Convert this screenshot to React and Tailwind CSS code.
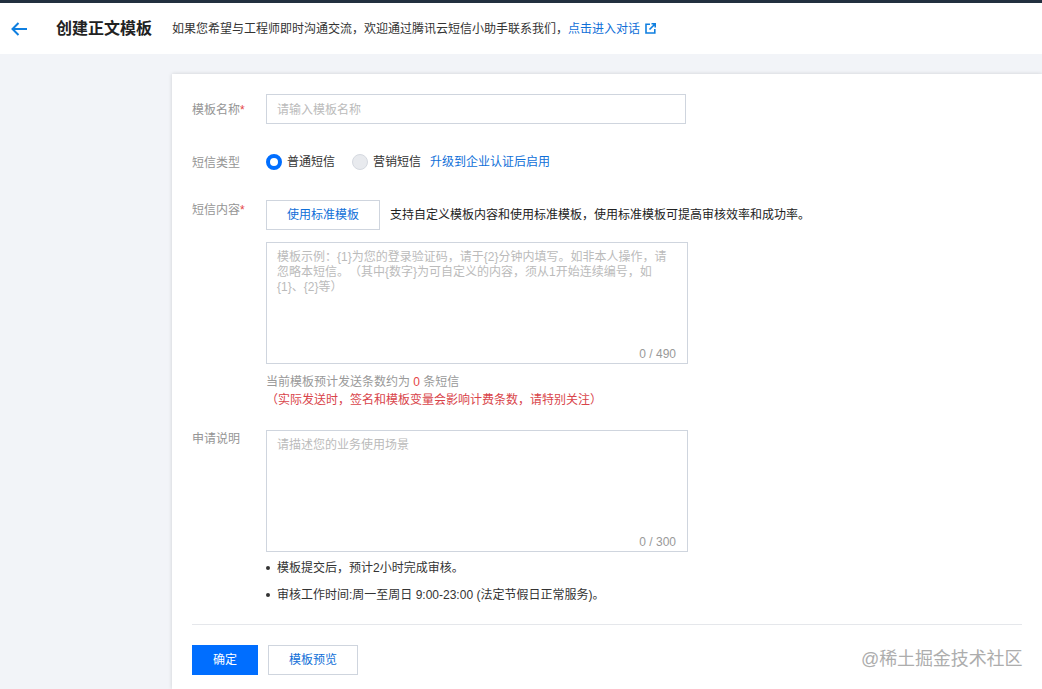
import React from 'react';

const font = { fontFamily: '"Liberation Sans", "Noto Sans CJK SC", sans-serif' };

function FormRow({ label, required, className = '', labelClass = '', children }) {
  return (
    <div className={`flex ${className}`}>
      <div className={`w-[74px] shrink-0 text-xs text-[#959595] ${labelClass}`}>
        {label}
        {required && <span className="text-[#e54545]">*</span>}
      </div>
      <div className="min-w-0 flex-1">{children}</div>
    </div>
  );
}

function TextBox({ height, width, children, count }) {
  return (
    <div className={`relative border border-[#cfd5de] bg-white px-[10px] pt-[7px] ${height} ${width}`}>
      <p className="text-xs leading-[15px] whitespace-nowrap text-[#bbbbbb] [text-spacing-trim:space-all]">{children}</p>
      <span className="absolute right-[11px] bottom-[1px] text-xs text-[#999999]">{count}</span>
    </div>
  );
}

export default function App() {
  return (
    <div style={font} className="flex h-[689px] flex-col overflow-hidden bg-[#f2f4f8]">
      {/* Header */}
      <header className="flex h-[54px] shrink-0 items-center border-t-[3px] border-[#22303f] bg-white pl-[11px]">
        <svg className="h-[14px] w-[16px]" viewBox="0 0 16 14" fill="none" stroke="#0f7fe0" strokeWidth="2">
          <path d="M16 7H1.500" />
          <path d="M7.500 1 1.500 7l6 6" />
        </svg>
        <h1 className="ml-[29px] text-base font-bold text-[#222222]">创建正文模板</h1>
        <p className="ml-[20px] text-xs text-[#333333]">如果您希望与工程师即时沟通交流，欢迎通过腾讯云短信小助手联系我们，</p>
        <a className="text-xs text-[#0f6fd8]">点击进入对话</a>
        <svg className="ml-[5px] h-[11px] w-[11px]" viewBox="0 0 11 11" fill="none" stroke="#0f7fe0" strokeWidth="1.6">
          <path d="M5 1.200H1v8.800h8.800V6" />
          <path d="M4.500 6.500 10 1M6.500 .8H10.200V4.500" />
        </svg>
      </header>

      {/* Form card */}
      <main className="mt-[20px] ml-[172px] flex-1 bg-white pt-[20px] pr-[20px] pl-[20px] shadow-[0_0_4px_rgba(0,0,0,0.15)]">
        <FormRow label="模板名称" required labelClass="leading-[32px]">
          <div className="flex h-[30px] w-[420px] items-center border border-[#cfd5de] px-[10px] pt-[2px] text-xs text-[#bbbbbb]">
            请输入模板名称
          </div>
        </FormRow>

        <FormRow label="短信类型" className="mt-[24px]" labelClass="leading-[26px]">
          <div className="flex h-[24px] items-center text-xs text-[#333333]">
            <span className="h-4 w-4 rounded-full border-[4px] border-[#006eff] bg-white" />
            <span className="ml-[5px]">普通短信</span>
            <span className="ml-[17px] h-4 w-4 rounded-full border border-[#d5d9e0] bg-[#e8eaee]" />
            <span className="ml-[5px]">营销短信</span>
            <a className="ml-[9px] text-[#0f6fd8]">升级到企业认证后启用</a>
          </div>
        </FormRow>

        <FormRow label="短信内容" required className="mt-[24px]" labelClass="leading-[20px]">
          <div className="flex items-center">
            <button className="h-[30px] w-[114px] border border-[#cfd5de] bg-white text-xs text-[#0f6fd8]">使用标准模板</button>
            <span className="ml-[10px] text-xs text-[#222222]">支持自定义模板内容和使用标准模板，使用标准模板可提高审核效率和成功率。</span>
          </div>
          <div className="mt-3">
            <TextBox height="h-[122px]" width="w-[422px]" count="0 / 490">
              模板示例：{'{1}'}为您的登录验证码，请于{'{2}'}分钟内填写。如非本人操作，请
              <br />
              忽略本短信。（其中{'{数字}'}为可自定义的内容，须从1开始连续编号，如
              <br />
              {'{1}'}、{'{2}'}等）
            </TextBox>
          </div>
          <p className="mt-[9px] text-xs leading-[18px] text-[#999999]">
            当前模板预计发送条数约为 <span className="text-[#e54545]">0</span> 条短信
          </p>
          <p className="text-xs leading-[18px] text-[#d9444a]">（实际发送时，签名和模板变量会影响计费条数，请特别关注）</p>
        </FormRow>

        <FormRow label="申请说明" className="mt-[21px]" labelClass="leading-[18px]">
          <TextBox height="h-[122px]" width="w-[422px]" count="0 / 300">
            请描述您的业务使用场景
          </TextBox>
          <ul className="mt-[7px] text-xs text-[#333333]">
            <li className="flex h-[18px] items-center">
              <span className="h-[4px] w-[4px] rounded-full bg-[#333333]" />
              <span className="ml-[7px]">模板提交后，预计2小时完成审核。</span>
            </li>
            <li className="mt-[9px] flex h-[18px] items-center">
              <span className="h-[4px] w-[4px] rounded-full bg-[#333333]" />
              <span className="ml-[7px]">审核工作时间:周一至周日 9:00-23:00 (法定节假日正常服务)。</span>
            </li>
          </ul>
        </FormRow>

        <div className="mt-[20px] flex gap-[10px] border-t border-[#e5e7eb] pt-[20px]">
          <button className="h-[30px] w-[66px] bg-[#006eff] text-xs text-white">确定</button>
          <button className="h-[30px] w-[90px] border border-[#cfd5de] bg-white text-xs text-[#0f6fd8]">模板预览</button>
        </div>
      </main>

      {/* Watermark */}
      <div className="absolute top-[647px] left-[861px] text-lg leading-[24px] tracking-[-0.1px] text-[#adadad]">@稀土掘金技术社区</div>
    </div>
  );
}
